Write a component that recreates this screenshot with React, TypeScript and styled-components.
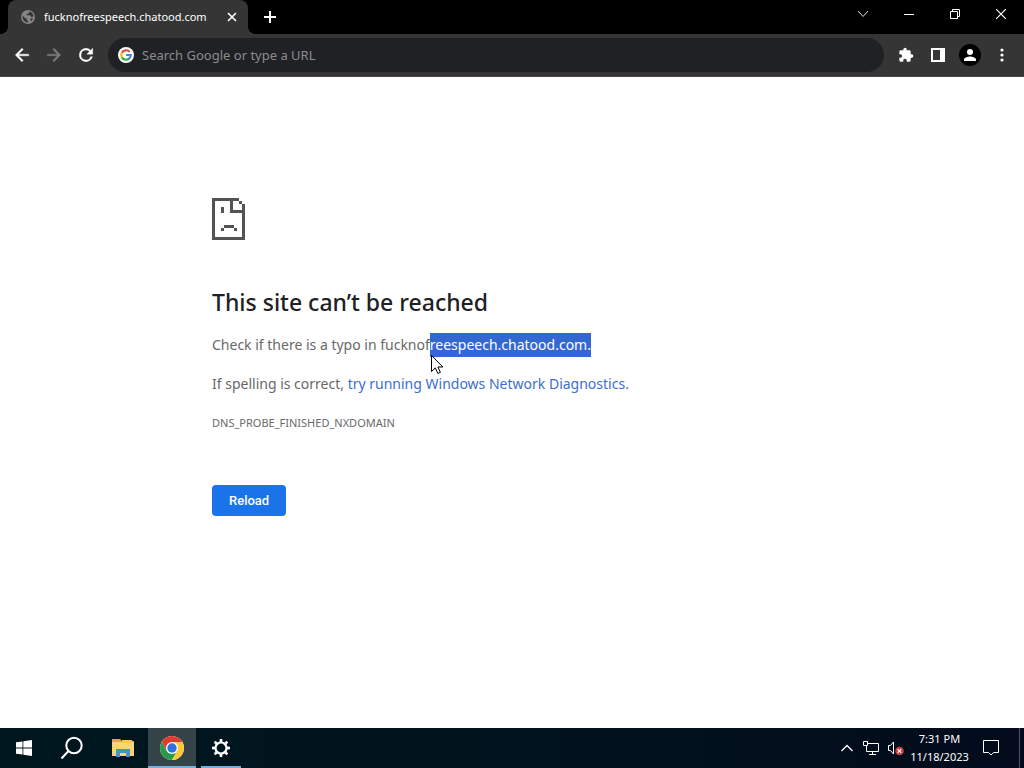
import React from "react";
import styled, { createGlobalStyle, css } from "styled-components";

const GlobalStyle = createGlobalStyle`
  *, *::before, *::after { box-sizing: border-box; }
  body { margin: 0; background: #fff; font-family: "Noto Sans", "Open Sans", sans-serif; }
  button { font: inherit; border: 0; padding: 0; margin: 0; background: none; color: inherit; }
`;

const Screen = styled.div`
  min-height: 100vh;
  display: flex;
  flex-direction: column;
`;

const TitleBar = styled.header`
  height: 34px;
  display: flex;
  align-items: stretch;
  padding-left: 8px;
  background: #000;
  color: #fff;
`;

const Tab = styled.div`
  position: relative;
  width: 240px;
  display: flex;
  align-items: center;
  padding: 0 8px 0 12px;
  gap: 8px;
  border-radius: 8px 8px 0 0;
  background: #353535;
  &::before, &::after {
    content: "";
    position: absolute;
    bottom: 0;
    width: 8px;
    height: 8px;
  }
  &::before { left: -8px; background: radial-gradient(circle at 0 0, #000 8px, #353535 8px); }
  &::after { right: -8px; background: radial-gradient(circle at 100% 0, #000 8px, #353535 8px); }
`;

const TabTitle = styled.span`
  flex: 1;
  font-size: 11px;
  line-height: 16px;
  white-space: nowrap;
`;

const IconButton = styled.button<{ $size?: number; $dim?: boolean }>`
  width: ${(p) => p.$size ?? 32}px;
  height: ${(p) => p.$size ?? 32}px;
  display: flex;
  align-items: center;
  justify-content: center;
  color: ${(p) => (p.$dim ? "#7d7d7d" : "#fff")};
`;

const NewTab = styled(IconButton)`
  margin-left: 6px;
  height: 34px;
`;

const WindowControls = styled.div`
  margin-left: auto;
  display: flex;
`;

const WindowButton = styled.button`
  width: 46px;
  height: 28px;
  display: flex;
  align-items: center;
  justify-content: center;
`;

const Toolbar = styled.nav`
  height: 43px;
  display: flex;
  align-items: center;
  padding: 0 6px;
  background: #353535;
  border-bottom: 1px solid #4a4a4a;
`;

const Omnibox = styled.label`
  flex: 1;
  height: 34px;
  margin: 0 6px;
  padding: 0 10px;
  display: flex;
  align-items: center;
  gap: 8px;
  border-radius: 17px;
  background: #202124;
`;

const OmniboxInput = styled.input`
  flex: 1;
  min-width: 0;
  border: 0;
  padding: 0;
  outline: 0;
  background: none;
  color: #fff;
  font: 13px/20px "Noto Sans", sans-serif;
  &::placeholder { color: #8a8c8f; opacity: 1; }
`;

const Page = styled.main`
  flex: 1;
  background: #fff;
`;

const ErrorContent = styled.section`
  width: 100%;
  max-width: 600px;
  margin: 0 auto;
  padding: 121px 0 40px;
  color: #696969;
  font-size: 14px;
  line-height: 24px;
`;

const SadPage = styled.svg`
  display: block;
  margin-bottom: 46px;
`;

const Heading = styled.h1`
  margin: 0 0 15px;
  font-size: 23px;
  font-weight: 500;
  line-height: 32px;
  color: #202124;
`;

const Message = styled.p`
  margin: 0 0 15px;
`;

const Selection = styled.mark`
  position: relative;
  display: inline-block;
  background: #3367d1;
  color: #fff;
`;

const Pointer = styled.svg`
  position: absolute;
  left: 1px;
  top: 22px;
`;

const DiagnosticsLink = styled.a`
  color: #3b6fd0;
  text-decoration: none;
`;

const ErrorCode = styled.div`
  font-size: 11px;
  line-height: 24px;
`;

const ReloadButton = styled.button`
  && {
    margin-top: 50px;
    height: 31px;
    padding: 0 17px;
    border-radius: 4px;
    background: #1a73e8;
    color: #fff;
    font: 500 13px/20px Roboto, sans-serif;
  }
`;

const Taskbar = styled.footer`
  height: 40px;
  display: flex;
  background: linear-gradient(90deg, #00161d 0%, #00141e 45%, #030b1c 100%);
  color: #fff;
`;

const TaskButton = styled.button<{ $active?: boolean }>`
  width: 48px;
  height: 40px;
  display: flex;
  align-items: center;
  justify-content: center;
  ${(p) => p.$active && css`&& { background: #344448; }`}
`;

const Apps = styled.div`
  display: flex;
  gap: 1px;
  margin-left: 3px;
`;

const AppSlot = styled.div<{ $running?: "front" | "back" }>`
  position: relative;
  ${(p) =>
    p.$running &&
    css`
      &::after {
        content: "";
        position: absolute;
        bottom: 0;
        left: ${p.$running === "front" ? 0 : 4}px;
        right: ${p.$running === "front" ? 0 : 4}px;
        height: 2px;
        background: #76b0e2;
      }
    `}
`;

const Tray = styled.div`
  margin-left: auto;
  display: flex;
  align-items: center;
`;

const TrayButton = styled.button`
  width: 24px;
  height: 40px;
  display: flex;
  align-items: center;
  justify-content: center;
`;

const Clock = styled.time`
  width: 65px;
  text-align: center;
  font-size: 11px;
  line-height: 18px;
  white-space: nowrap;
`;

const ActionCenter = styled(TrayButton)`
  width: 38px;
`;

const ShowDesktop = styled.button`
  && {
    width: 5px;
    height: 40px;
    margin-left: 9px;
    border-left: 1px solid #4d5664;
  }
`;

const Globe = () => (
  <svg width="16" height="16" viewBox="0 0 16 16" aria-hidden="true">
    <circle cx="8" cy="8" r="7" fill="#858585" />
    <path d="M2.500 6.500 5 9l1.500.3v1.500L8 12v1.500C4.500 13.500 2.200 10.500 2.500 6.500ZM9.500 2.500 9 4.500H7L6.500 6.300h3.500l1 1.500h2.500C13.500 5 12 3 9.500 2.500ZM13 9.500l-1.500 2.700-1.200-1.700 1-1.500Z" fill="#353535" />
  </svg>
);

const GoogleLogo = () => (
  <svg width="16" height="16" viewBox="0 0 16 16" aria-hidden="true">
    <circle cx="8" cy="8" r="8" fill="#fff" />
    <g fill="none" strokeWidth="2.200">
      <path d="M11.600 4.900A4.750 4.750 0 0 0 3.800 5.800" stroke="#ea4335" />
      <path d="M3.900 5.600a4.750 4.750 0 0 0 0 4.800" stroke="#fbbc05" />
      <path d="M3.800 10.200a4.750 4.750 0 0 0 7.500 1.200" stroke="#34a853" />
      <path d="M8 8h4.750a4.750 4.750 0 0 1-1.600 3.600" stroke="#4285f4" />
    </g>
  </svg>
);

const FileExplorer = () => (
  <svg width="22" height="20" viewBox="0 0 22 20" aria-hidden="true">
    <path d="M0 1h8l2 2h12v14H0Z" fill="#e9a63a" />
    <path d="M0 4h22v14H0Z" fill="#f8d675" />
    <path d="M10 2h10v3H10Z" fill="#f5c95c" />
    <path d="M4 11h14v8h-4v-4H8v4H4Z" fill="#4795bd" />
  </svg>
);

const ChromeLogo = () => (
  <svg width="24" height="24" viewBox="0 0 24 24" aria-hidden="true">
    <circle cx="12" cy="12" r="12" fill="#fff" />
    <path d="M12 6h10.390A12 12 0 0 0 1.610 6L6.800 15 12 6Z" fill="#e33b2e" />
    <path d="M1.610 6A12 12 0 0 0 12 24l5.200-9H6.800Z" fill="#27994b" />
    <path d="M12 24A12 12 0 0 0 22.390 6H12l5.200 9Z" fill="#fcc934" />
    <circle cx="12" cy="12" r="6" fill="#fff" />
    <circle cx="12" cy="12" r="4.700" fill="#2e72df" />
  </svg>
);

const Gear = () => (
  <svg width="20" height="20" viewBox="0 0 20 20" aria-hidden="true">
    <circle cx="10" cy="10" r="5.500" fill="none" stroke="#fff" strokeWidth="2.200" />
    {[0, 45, 90, 135, 180, 225, 270, 315].map((angle) => (
      <path key={angle} d="M8.500 4 8.800 1h2.400l.3 3Z" fill="#fff" transform={`rotate(${angle} 10 10)`} />
    ))}
  </svg>
);

export default function App() {
  return (
    <Screen>
      <GlobalStyle />
      <TitleBar>
        <Tab>
          <Globe />
          <TabTitle>fucknofreespeech.chatood.com</TabTitle>
          <IconButton $size={16} aria-label="Close tab">
            <svg width="10" height="10" viewBox="0 0 10 10">
              <path d="m1 1 8 8M9 1 1 9" stroke="currentColor" strokeWidth="1.600" />
            </svg>
          </IconButton>
        </Tab>
        <NewTab aria-label="New tab">
          <svg width="12" height="12" viewBox="0 0 12 12">
            <path d="M6 0v12M0 6h12" stroke="currentColor" strokeWidth="2" />
          </svg>
        </NewTab>
        <WindowControls>
          <WindowButton aria-label="Search tabs">
            <svg width="12" height="8" viewBox="0 0 12 8">
              <path d="m1 1 5 5.500L11 1" fill="none" stroke="#ddd" />
            </svg>
          </WindowButton>
          <WindowButton aria-label="Minimize">
            <svg width="10" height="2" viewBox="0 0 10 2"><path d="M0 1.500h10" stroke="#fff" /></svg>
          </WindowButton>
          <WindowButton aria-label="Restore">
            <svg width="10" height="10" viewBox="0 0 10 10" fill="none" stroke="#fff">
              <path d="M.5 2.500h7v7h-7ZM2.500 2.500v-2h7v7h-2" />
            </svg>
          </WindowButton>
          <WindowButton aria-label="Close">
            <svg width="10" height="10" viewBox="0 0 10 10"><path d="m0 0 10 10M10 0 0 10" stroke="#fff" strokeWidth="1.200" /></svg>
          </WindowButton>
        </WindowControls>
      </TitleBar>

      <Toolbar aria-label="Browser toolbar">
        <IconButton aria-label="Back">
          <svg width="20" height="20" viewBox="0 0 24 24" fill="currentColor">
            <path d="M20 11H7.830l5.590-5.590L12 4l-8 8 8 8 1.410-1.410L7.830 13H20z" stroke="currentColor" strokeWidth=".5" />
          </svg>
        </IconButton>
        <IconButton $dim aria-label="Forward">
          <svg width="20" height="20" viewBox="0 0 24 24" fill="currentColor">
            <path d="m12 4-1.410 1.410L16.170 11H4v2h12.170l-5.580 5.590L12 20l8-8z" stroke="currentColor" strokeWidth=".5" />
          </svg>
        </IconButton>
        <IconButton aria-label="Reload page">
          <svg width="20" height="20" viewBox="0 0 24 24" fill="currentColor">
            <path d="M17.650 6.350A7.960 7.960 0 0 0 12 4a8 8 0 1 0 7.730 10h-2.080A6 6 0 1 1 12 6c1.660 0 3.140.69 4.220 1.780L13 11h7V4z" stroke="currentColor" strokeWidth=".5" />
          </svg>
        </IconButton>
        <Omnibox>
          <GoogleLogo />
          <OmniboxInput aria-label="Address and search bar" placeholder="Search Google or type a URL" />
        </Omnibox>
        <IconButton aria-label="Extensions">
          <svg width="16" height="16" viewBox="0 0 24 24" fill="currentColor">
            <path d="M20.500 11H19V7c0-1.100-.9-2-2-2h-4V3.500a2.500 2.500 0 0 0-5 0V5H4c-1.100 0-2 .9-2 2v3.800h1.500a2.700 2.700 0 0 1 0 5.400H2V20c0 1.100.9 2 2 2h3.800v-1.500a2.700 2.700 0 0 1 5.400 0V22H17c1.100 0 2-.9 2-2v-4h1.500a2.500 2.500 0 0 0 0-5z" />
          </svg>
        </IconButton>
        <IconButton aria-label="Side panel">
          <svg width="14" height="14" viewBox="0 0 14 14">
            <path d="M0 0h14v14H0Zm2 2v10h7V2Z" fill="currentColor" fillRule="evenodd" />
          </svg>
        </IconButton>
        <IconButton aria-label="Profile">
          <svg width="22" height="22" viewBox="0 0 22 22">
            <circle cx="11" cy="11" r="11" fill="#000" />
            <circle cx="11" cy="8" r="3" fill="#fff" />
            <path d="M5 17v-1.500c0-2 4-3 6-3s6 1 6 3V17Z" fill="#fff" />
          </svg>
        </IconButton>
        <IconButton aria-label="Menu">
          <svg width="4" height="14" viewBox="0 0 4 14" fill="currentColor">
            <circle cx="2" cy="2" r="1.600" />
            <circle cx="2" cy="7" r="1.600" />
            <circle cx="2" cy="12" r="1.600" />
          </svg>
        </IconButton>
      </Toolbar>

      <Page>
        <ErrorContent>
          <SadPage width="33" height="42" viewBox="0 0 33 42" shapeRendering="crispEdges" aria-hidden="true">
            <path
              fill="#535353"
              d="M0 0h27v3h-6v9h12v30H0ZM3 3v36h27V15H18V3ZM27 3h3v3h-3ZM30 6h3v6h-3ZM9 9h3v6H9ZM12 27h10v3H12ZM9 30h3v3H9ZM22 30h3v3h-3Z"
              fillRule="evenodd"
            />
          </SadPage>
          <Heading>This site can’t be reached</Heading>
          <Message>
            Check if there is a typo in fucknof
            <Selection>
              reespeech.chatood.com.
              <Pointer width="13" height="19" viewBox="0 0 13 19" aria-hidden="true">
                <path d="M.5.500v16l3.800-3.600 2.600 5.600 2.500-1.100-2.500-5.400h5Z" fill="#fff" stroke="#000" />
              </Pointer>
            </Selection>
          </Message>
          <Message>
            If spelling is correct, <DiagnosticsLink href="#diagnostics">try running Windows Network Diagnostics</DiagnosticsLink>.
          </Message>
          <ErrorCode>DNS_PROBE_FINISHED_NXDOMAIN</ErrorCode>
          <ReloadButton type="button">Reload</ReloadButton>
        </ErrorContent>
      </Page>

      <Taskbar>
        <TaskButton aria-label="Start">
          <svg width="16" height="16" viewBox="0 0 16 16" fill="#fff">
            <path d="M0 2.300 6.500 1.400v6.200H0ZM7.300 1.300 16 0v7.600H7.300ZM0 8.400h6.500v6.200L0 13.700ZM7.300 8.400H16V16l-8.700-1.300Z" />
          </svg>
        </TaskButton>
        <TaskButton aria-label="Search">
          <svg width="24" height="24" viewBox="0 0 24 24" fill="none" stroke="#fff" strokeWidth="2">
            <circle cx="14" cy="9.500" r="7.700" />
            <path d="m8.500 15-7 7.500" />
          </svg>
        </TaskButton>
        <Apps>
          <AppSlot>
            <TaskButton aria-label="File Explorer"><FileExplorer /></TaskButton>
          </AppSlot>
          <AppSlot $running="front">
            <TaskButton $active aria-label="Google Chrome"><ChromeLogo /></TaskButton>
          </AppSlot>
          <AppSlot $running="back">
            <TaskButton aria-label="Settings"><Gear /></TaskButton>
          </AppSlot>
        </Apps>
        <Tray>
          <TrayButton aria-label="Show hidden icons">
            <svg width="12" height="8" viewBox="0 0 12 8"><path d="m.5 7 5.500-5.500L11.500 7" fill="none" stroke="#fff" strokeWidth="1.300" /></svg>
          </TrayButton>
          <TrayButton aria-label="Network">
            <svg width="16" height="14" viewBox="0 0 16 14" fill="none" stroke="#fff">
              <path d="M5 2.500h10.500v8H3.500V5M6 13.500h7M9.500 10.500v3M.5.500h4v4h-4Z" />
            </svg>
          </TrayButton>
          <TrayButton aria-label="Volume muted">
            <svg width="18" height="16" viewBox="0 0 18 16">
              <path d="M2.500 5.500h2l3-3.500v12l-3-3.500h-2Z" fill="none" stroke="#fff" />
              <circle cx="13.500" cy="11" r="4.300" fill="#cf3d3d" />
              <path d="m11.700 9.200 3.600 3.600M15.300 9.200l-3.600 3.600" stroke="#fff" strokeWidth="1.200" />
            </svg>
          </TrayButton>
          <Clock>7:31 PM<br />11/18/2023</Clock>
          <ActionCenter aria-label="Notifications">
            <svg width="16" height="16" viewBox="0 0 16 16" fill="none" stroke="#fff">
              <path d="M.5.500h15v12h-5L8 15l-2.500-2.500h-5Z" />
            </svg>
          </ActionCenter>
          <ShowDesktop aria-label="Show desktop" />
        </Tray>
      </Taskbar>
    </Screen>
  );
}
